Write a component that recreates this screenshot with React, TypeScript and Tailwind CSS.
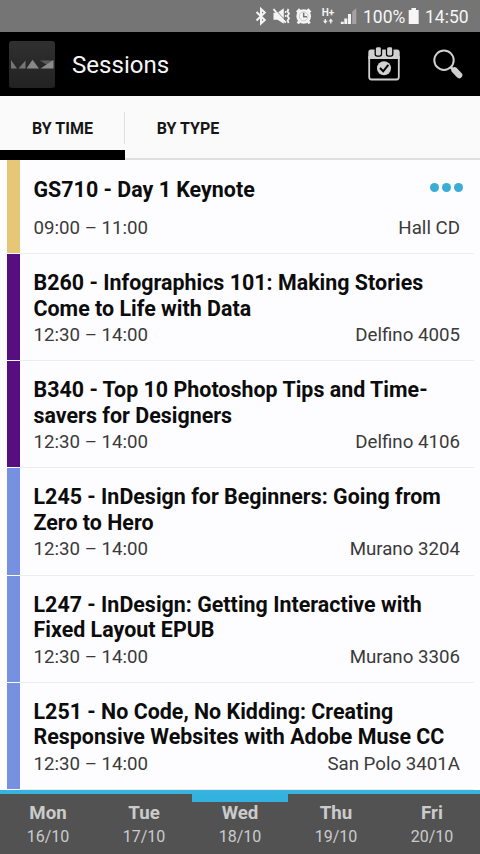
interface Session {
  title: string[]
  time: string
  room: string
  color: string
  hasMenu?: boolean
}

const sessions: Session[] = [
  { title: ['GS710 - Day 1 Keynote'], time: '09:00 – 11:00', room: 'Hall CD', color: 'bg-[#e6c775]', hasMenu: true },
  { title: ['B260 - Infographics 101: Making Stories', 'Come to Life with Data'], time: '12:30 – 14:00', room: 'Delfino 4005', color: 'bg-[#570e82]' },
  { title: ['B340 - Top 10 Photoshop Tips and Time-', 'savers for Designers'], time: '12:30 – 14:00', room: 'Delfino 4106', color: 'bg-[#570e82]' },
  { title: ['L245 - InDesign for Beginners: Going from', 'Zero to Hero'], time: '12:30 – 14:00', room: 'Murano 3204', color: 'bg-[#7690e2]' },
  { title: ['L247 - InDesign: Getting Interactive with', 'Fixed Layout EPUB'], time: '12:30 – 14:00', room: 'Murano 3306', color: 'bg-[#7690e2]' },
  { title: ['L251 - No Code, No Kidding: Creating', 'Responsive Websites with Adobe Muse CC'], time: '12:30 – 14:00', room: 'San Polo 3401A', color: 'bg-[#7690e2]' },
]

const days = [
  { name: 'Mon', date: '16/10' },
  { name: 'Tue', date: '17/10' },
  { name: 'Wed', date: '18/10' },
  { name: 'Thu', date: '19/10' },
  { name: 'Fri', date: '20/10' },
]

function StatusIcons() {
  return (
    <svg className="shrink-0" width="106" height="32" viewBox="252 0 106 32" fill="none">
      {/* Bluetooth */}
      <path d="M256.5 12 L264.8 20 L261 23.5 V9 L264.8 12.5 L256.5 20.5" stroke="#f4f4f4" strokeWidth="2" />
      {/* Muted, vibrating */}
      <path d="M273.5 12.8 H277.5 L283.8 8.3 V23.8 L277.5 19.8 H273.5 Z" fill="#f4f4f4" />
      <path d="M273.5 9 L285.8 22.6" stroke="#f4f4f4" strokeWidth="2" />
      <path d="M274.5 8.6 L286 21" stroke="#757575" strokeWidth="0.8" />
      <path d="M288.5 9 L287.4 11.3 L289 13.6 L287.4 16 L289 18.3 L287.6 20.6 L288.6 23" stroke="#f4f4f4" strokeWidth="1.8" />
      <path d="M285.6 11 V13 M285.6 15 V17" stroke="#f4f4f4" strokeWidth="1.3" />
      {/* Alarm */}
      <circle cx="303.7" cy="16.5" r="7.3" fill="#f4f4f4" />
      <path d="M297 12.5 L300 9.3 M310.4 12.5 L307.4 9.3 M299.2 21.5 L297.8 23.5 M308.2 21.5 L309.6 23.5" stroke="#f4f4f4" strokeWidth="2.8" />
      <circle cx="303.7" cy="16.3" r="4.4" stroke="#b8b8b8" strokeWidth="0.7" />
      <path d="M303.7 12.8 V16.8 H307" stroke="#757575" strokeWidth="1.5" />
      {/* Data arrows under the network label */}
      <path d="M325.3 19 V22 M330.8 20.5 V23.5" stroke="#f4f4f4" strokeWidth="1.3" />
      <path d="M323 20.8 H327.6 L325.3 23.8 Z M328.5 21.5 H333.1 L330.8 18.5 Z" fill="#f4f4f4" />
      {/* Signal */}
      <path d="M342.3 21.8 V24 M345.8 18.5 V24 M349.5 14 V24" stroke="#f4f4f4" strokeWidth="3" />
      <path d="M352.2 11.5 L356.3 8.3 V24 H352.2 Z" fill="#a3a3a3" />
      <text x="321.8" y="16" fill="#f4f4f4" fontSize="10" fontWeight="700" textLength="12.5">H+</text>
    </svg>
  )
}

function StatusBar() {
  return (
    <div className="flex h-8 shrink-0 items-center bg-[#757575] pl-[252px] text-[#f6f6f6]">
      <StatusIcons />
      <span className="ml-[5px] w-[45px] origin-left scale-x-[.92] pt-0.5 text-[19px] whitespace-nowrap">100%</span>
      <svg className="shrink-0" width="12" height="18" viewBox="0 0 12 18" fill="#f6f6f6">
        <path d="M3.5 1 H8 V3 H10.7 V17 H0.7 V3 H3.5 Z" />
      </svg>
      <span className="ml-[5px] origin-left scale-x-[.92] pt-0.5 text-[19px] whitespace-nowrap">14:50</span>
    </div>
  )
}

function Logo() {
  return (
    <svg className="shrink-0" width="46" height="47" viewBox="0 0 46 47">
      <defs>
        <linearGradient id="logo-bg" x1="0" y1="0" x2="0" y2="1">
          <stop stopColor="#303030" />
          <stop offset="1" stopColor="#222" />
        </linearGradient>
      </defs>
      <rect width="46" height="47" rx="3" fill="url(#logo-bg)" />
      <path d="M2 19 L8 27.5 H2 Z M16.5 19.5 V27.5 H9.5 Z" fill="#777" />
      <path d="M17.5 27.5 L23.5 18.8 L30 27.5 Z" fill="#888" />
      <path d="M31 19.5 H44.5 L38 24 Z" fill="#5c5c5c" />
      <path d="M44.5 19 V27.5 H31.5 Z" fill="#8c8c8c" />
    </svg>
  )
}

function Header() {
  return (
    <header className="flex h-16 shrink-0 items-center bg-black pr-[16px] pl-[9px]">
      <Logo />
      <h1 className="ml-[17px] flex-1 pt-0.5 text-[24.1px] text-[#f5f5f5]">Sessions</h1>
      <svg width="34" height="36" viewBox="0 0 34 36" fill="none">
        <path d="M1.3 13 V6.5 Q1.3 3.5 4 3.5 H30 Q32.7 3.5 32.7 6.5 V13 Z" fill="#d0d0d0" />
        <path d="M2.2 10 V31 Q2.2 33.5 4.5 33.5 H29.5 Q31.8 33.5 31.8 31 V10" stroke="#d0d0d0" strokeWidth="1.8" />
        <rect x="8.2" y="0.6" width="6.3" height="9.5" rx="2" fill="#d0d0d0" stroke="#000" strokeWidth="1.3" />
        <rect x="19.5" y="0.6" width="6.3" height="9.5" rx="2" fill="#d0d0d0" stroke="#000" strokeWidth="1.3" />
        <circle cx="17" cy="22.3" r="7" fill="#d0d0d0" />
        <path d="M13 22 L16.2 25.3 L21.3 18.8" stroke="#000" strokeWidth="2" />
      </svg>
      <svg className="ml-[31px]" width="32" height="32" viewBox="0 0 32 32" fill="none">
        <circle cx="12" cy="12.2" r="9.7" stroke="#d0d0d0" strokeWidth="2" />
        <path d="M18.5 19 L21.5 22" stroke="#d0d0d0" strokeWidth="2.5" />
        <path d="M22.5 22.2 L27.2 27.2" stroke="#d0d0d0" strokeWidth="6.2" strokeLinecap="round" />
      </svg>
    </header>
  )
}

function Tabs() {
  return (
    <div className="flex h-16 shrink-0 border-b-2 border-[#dfdfdf] bg-[#fafafa] text-[16px] font-bold text-[#161616]">
      <div className="-mb-0.5 flex h-16 w-[125px] flex-col">
        <span className="flex flex-1 items-center justify-center pt-3">BY TIME</span>
        <div className="h-[10.5px] bg-black" />
      </div>
      <div className="-ml-px mt-4 h-8 w-px bg-[#dedede]" />
      <span className="flex h-[53.5px] w-[126px] items-center justify-center pt-3">BY TYPE</span>
    </div>
  )
}

function SessionRow({ session }: { session: Session }) {
  return (
    <div className={`flex pl-[7px] ${session.hasMenu ? 'h-[94px]' : 'h-[107.2px]'}`}>
      <div className={`mb-px w-[13px] shrink-0 ${session.color}`} />
      <div className={`mr-[6px] flex flex-1 flex-col border-b border-[#ececef] pr-[14px] pl-[13.5px] ${session.hasMenu ? 'pt-[17px]' : 'pt-4'}`}>
        <div className="flex justify-between">
          <h2 className="text-[21.4px] leading-[25.5px] font-bold tracking-[.02px] text-[#0c0c0c]">
            {session.title.map((line) => (
              <span key={line} className="block whitespace-nowrap">{line}</span>
            ))}
          </h2>
          {session.hasMenu && (
            <div className="-mr-[3px] flex gap-[2.5px] pt-[6px]">
              <span className="size-[9.4px] rounded-full bg-[#3aadd6]" />
              <span className="size-[9.4px] rounded-full bg-[#3aadd6]" />
              <span className="size-[9.4px] rounded-full bg-[#3aadd6]" />
            </div>
          )}
        </div>
        <div className={`flex justify-between text-[18.7px] leading-[22px] text-[#3a3a3a] ${session.hasMenu ? 'mt-[14.5px]' : 'mt-[3px]'}`}>
          <span>{session.time}</span>
          <span>{session.room}</span>
        </div>
      </div>
    </div>
  )
}

function DayBar() {
  return (
    <nav className="flex h-16 shrink-0 border-t-4 border-[#38b2de] bg-[#525252] text-[#cbcbcb]">
      {days.map((day) => (
        <div key={day.name} className="flex flex-1 flex-col items-center">
          <div className={`h-2 w-full ${day.name === 'Wed' ? 'bg-[#33b1df]' : ''}`} />
          <span className="text-[18.7px] leading-[22px] font-bold">{day.name}</span>
          <span className="mt-[3px] text-[16px] leading-5">{day.date}</span>
        </div>
      ))}
    </nav>
  )
}

export default function App() {
  return (
    <div className="flex h-[854px] w-[480px] flex-col overflow-hidden bg-[#fdfcfe] font-[Roboto,sans-serif]">
      <StatusBar />
      <Header />
      <Tabs />
      <main className="min-h-0 flex-1 overflow-hidden">
        {sessions.map((session) => (
          <SessionRow key={session.title[0]} session={session} />
        ))}
      </main>
      <DayBar />
    </div>
  )
}
